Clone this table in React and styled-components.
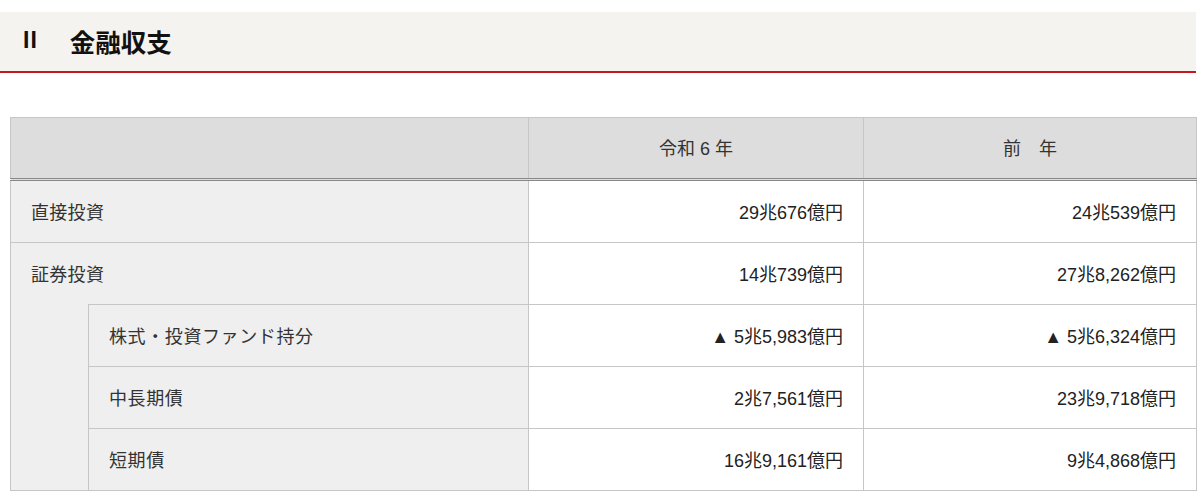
import React from 'react';
import styled, { createGlobalStyle } from 'styled-components';

const GlobalStyle = createGlobalStyle`
    body {
        margin: 0;
        background: #fff;
        font-family: "Liberation Sans", "Noto Sans CJK JP", sans-serif;
        color: #333;
    }
`;

const Page = styled.div`
    width: 1196px;
    padding-top: 12px;
`;

const Heading = styled.h2`
    margin: 0;
    height: 61px;
    box-sizing: border-box;
    padding: 0 0 3px 23px;
    display: flex;
    align-items: center;
    gap: 32px;
    background: #f4f3f0;
    border-bottom: 2px solid #c8161e;
    color: #111;
    font-size: 25.5px;
    font-weight: bold;
`;

const Numeral = styled.span`
    font-size: 23px;
    letter-spacing: 1px;
`;

const Table = styled.table`
    margin: 44px 0 0 10px;
    width: 1186px;
    border-collapse: collapse;
    font-size: 18px;
    table-layout: fixed;
`;

const HeadCell = styled.th`
    height: 58px;
    padding: 0 20px 2px;
    background: #dddddd;
    border: 1px solid #c6c6c6;
    border-bottom: 3px double #888;
    font-weight: normal;
    text-align: center;
    color: #333;
`;

const LabelCell = styled.th`
    height: 59px;
    padding: 0 20px 2px;
    background: #efefef;
    border: 1px solid #c6c6c6;
    font-weight: normal;
    text-align: left;
    color: #333;
    letter-spacing: ${({ $spaced }) => ($spaced ? '0.6px' : '0.3px')};
`;

const Spacer = styled.td`
    background: #efefef;
    border: 1px solid #c6c6c6;
    border-top: hidden;
`;

const ValueCell = styled.td`
    height: 59px;
    padding: 0 20px 2px;
    background: #fff;
    border: 1px solid #c6c6c6;
    text-align: right;
    color: #222;
`;

const rows = [
    { label: '直接投資', now: '29兆676億円', prev: '24兆539億円' },
    { label: '証券投資', now: '14兆739億円', prev: '27兆8,262億円' },
];

const subRows = [
    { label: '株式・投資ファンド持分', now: '▲ 5兆5,983億円', prev: '▲ 5兆6,324億円' },
    { label: '中長期債', now: '2兆7,561億円', prev: '23兆9,718億円' },
    { label: '短期債', now: '16兆9,161億円', prev: '9兆4,868億円' },
];

const App = () => (
    <Page>
        <GlobalStyle />
        <Heading>
            <Numeral>II</Numeral>
            <span>金融収支</span>
        </Heading>
        <Table>
            <colgroup>
                <col style={{ width: 78 }} />
                <col style={{ width: 440 }} />
                <col style={{ width: 335 }} />
                <col style={{ width: 333 }} />
            </colgroup>
            <thead>
                <tr>
                    <HeadCell colSpan={2} />
                    <HeadCell>令和 6 年</HeadCell>
                    <HeadCell>前　年</HeadCell>
                </tr>
            </thead>
            <tbody>
                {rows.map((r) => (
                    <tr key={r.label}>
                        <LabelCell colSpan={2}>{r.label}</LabelCell>
                        <ValueCell>{r.now}</ValueCell>
                        <ValueCell>{r.prev}</ValueCell>
                    </tr>
                ))}
                {subRows.map((r, i) => (
                    <tr key={r.label}>
                        {i === 0 && <Spacer rowSpan={subRows.length} />}
                        <LabelCell $spaced>{r.label}</LabelCell>
                        <ValueCell>{r.now}</ValueCell>
                        <ValueCell>{r.prev}</ValueCell>
                    </tr>
                ))}
            </tbody>
        </Table>
    </Page>
);

export default App;
